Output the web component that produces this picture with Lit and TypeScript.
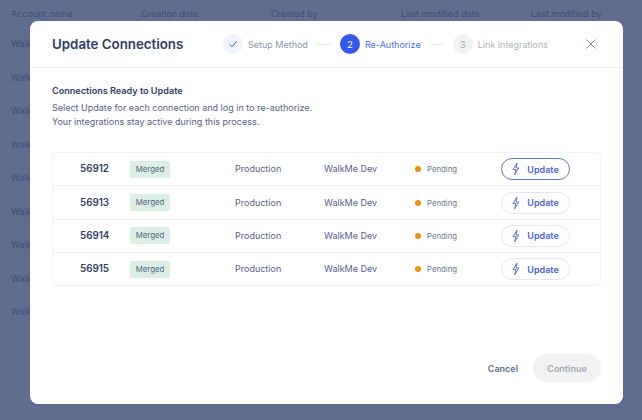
import { LitElement, html, css, svg } from 'lit'
import { customElement } from 'lit/decorators.js'

const HEADERS = ['Account name', 'Creation date', 'Created by', 'Last modified date', 'Last modified by']
const BG_ROWS = 9
const CONNECTIONS = ['56912', '56913', '56914', '56915']

const bolt = svg`<path d="M7 1.2 L3 7.6 H6 L4.6 12.8 L8.8 6 H6 Z" fill="none" stroke="currentColor" stroke-width=".9" stroke-linejoin="round"/>`

@customElement('app-root')
export class AppRoot extends LitElement {
    static styles = css`
        :host {
            display: block;
            position: relative;
            width: 642px;
            height: 420px;
            overflow: hidden;
            background: #5f6d8f;
            font-family: Inter, 'Liberation Sans', sans-serif;
        }

        .bg {
            display: grid;
            grid-template-columns: repeat(5, 130px);
            grid-template-rows: 27px;
            grid-auto-rows: 33.5px;
            padding: 0 0 0 11px;
            color: #3f4c74;
            font-size: 9px;
            align-items: center;
        }

        .modal {
            position: absolute;
            left: 30px;
            top: 21px;
            width: 593px;
            height: 383px;
            display: flex;
            flex-direction: column;
            background: #fff;
            border-radius: 8px;
        }

        .header {
            display: flex;
            align-items: center;
            height: 46px;
            padding: 0 27px 0 22px;
            border-bottom: 1px solid #f0f1f5;
        }

        h1 {
            margin: 0 40px 0 0;
            width: 131px;
            font: 600 13.3px Inter, sans-serif;
            color: #2f3d66;
            white-space: nowrap;
        }

        .steps {
            display: flex;
            align-items: center;
            flex: 1;
            font-size: 9px;
        }

        .circle {
            width: 20px;
            height: 20px;
            border-radius: 50%;
            display: flex;
            align-items: center;
            justify-content: center;
            margin-right: 5px;
            font-size: 9.5px;
        }

        .done .circle {
            background: #f0f3fc;
            color: #3b5ef0;
        }

        .done .label {
            color: #8a93ad;
        }

        .active .circle {
            background: #3358ee;
            color: #fff;
        }

        .active .label {
            color: #4f6df0;
        }

        .todo .circle {
            background: #f2f2f3;
            color: #a5a7ad;
        }

        .todo .label {
            color: #b0b2b8;
        }

        .step {
            display: flex;
            align-items: center;
        }

        .line {
            width: 14px;
            height: 1px;
            margin: 0 9px;
            background: #e8eaf1;
        }

        .close {
            width: 10px;
            height: 10px;
            color: #7d86a3;
            display: block;
        }

        .body {
            flex: 1;
            padding: 16px 22px 0;
            color: #56628a;
            font-size: 9px;
            line-height: 14px;
        }

        h2 {
            margin: 0 0 3px;
            font-size: 9.1px;
            font-weight: 600;
            color: #2f3d66;
            line-height: 14px;
        }

        p {
            margin: 0;
        }

        .table {
            margin-top: 23px;
            border: 1px solid #f1f2f6;
            border-radius: 5px;
        }

        .row {
            display: grid;
            grid-template-columns: 50px 105px 89px 91px 86px 69px;
            height: 33.4px;
            align-items: center;
            padding-left: 27px;
            box-sizing: border-box;
            border-bottom: 1px solid #f1f2f6;
            font-size: 9px;
        }

        .row:last-child {
            border-bottom: none;
            height: 32px;
        }

        .id {
            font-weight: 600;
            font-size: 9.8px;
            color: #2f3d66;
        }

        .badge {
            justify-self: start;
            width: 40px;
            height: 17px;
            line-height: 17px;
            text-align: center;
            background: #dcefe4;
            border-radius: 2px;
            font-size: 7.8px;
            color: #56628a;
        }

        .status {
            display: flex;
            align-items: center;
            gap: 6px;
            font-size: 7.8px;
            color: #6c7690;
        }

        .dot {
            width: 6px;
            height: 6px;
            border-radius: 50%;
            background: #ef8f0c;
        }

        .update {
            display: flex;
            align-items: center;
            justify-content: center;
            gap: 6px;
            height: 22px;
            padding: 0 2px 0 0;
            box-sizing: border-box;
            border: 1px solid #e1e6fb;
            border-radius: 11px;
            background: #fff;
            color: #4a66d8;
            font: 600 9px Inter, sans-serif;
        }

        .update.focus {
            border-color: #5f79cf;
        }

        .update svg {
            width: 11px;
            height: 14px;
        }

        .footer {
            display: flex;
            justify-content: flex-end;
            align-items: center;
            gap: 15px;
            padding: 0 22px 22px;
        }

        .cancel {
            border: 0;
            padding: 0;
            background: none;
            color: #5f6d93;
            font: 600 9px Inter, sans-serif;
        }

        .continue {
            width: 68px;
            height: 28px;
            border: 0;
            padding: 0;
            border-radius: 14px;
            background: #f2f2f3;
            color: #a5a7ad;
            font: 600 9px Inter, sans-serif;
        }
    `

    render() {
        return html`
            <div class="bg">
                ${HEADERS.map((h) => html`<div>${h}</div>`)}
                ${Array.from({ length: BG_ROWS }, () => html`<div>WalkMe</div><div></div><div></div><div></div><div></div>`)}
            </div>
            <div class="modal">
                <div class="header">
                    <h1>Update Connections</h1>
                    <div class="steps">
                        <div class="step done">
                            <div class="circle">
                                <svg width="10" height="10" viewBox="0 0 10 10"><path d="M1.5 5.3 L4 7.8 L8.6 2.2" fill="none" stroke="currentColor" stroke-width="1"/></svg>
                            </div>
                            <span class="label">Setup Method</span>
                        </div>
                        <div class="line"></div>
                        <div class="step active"><div class="circle">2</div><span class="label">Re-Authorize</span></div>
                        <div class="line"></div>
                        <div class="step todo"><div class="circle">3</div><span class="label">Link Integrations</span></div>
                    </div>
                    <svg class="close" viewBox="0 0 10 10"><path d="M.5 .5 L9.5 9.5 M9.5 .5 L.5 9.5" stroke="currentColor" stroke-width="1"/></svg>
                </div>
                <div class="body">
                    <h2>Connections Ready to Update</h2>
                    <p>Select Update for each connection and log in to re-authorize.<br />Your integrations stay active during this process.</p>
                    <div class="table">
                        ${CONNECTIONS.map(
                            (id, i) => html`
                                <div class="row">
                                    <span class="id">${id}</span>
                                    <span class="badge">Merged</span>
                                    <span>Production</span>
                                    <span>WalkMe Dev</span>
                                    <span class="status"><span class="dot"></span>Pending</span>
                                    <button class="update ${i === 0 ? 'focus' : ''}">
                                        <svg viewBox="0 0 11 14">${bolt}</svg>Update
                                    </button>
                                </div>
                            `
                        )}
                    </div>
                </div>
                <div class="footer">
                    <button class="cancel">Cancel</button>
                    <button class="continue">Continue</button>
                </div>
            </div>
        `
    }
}
